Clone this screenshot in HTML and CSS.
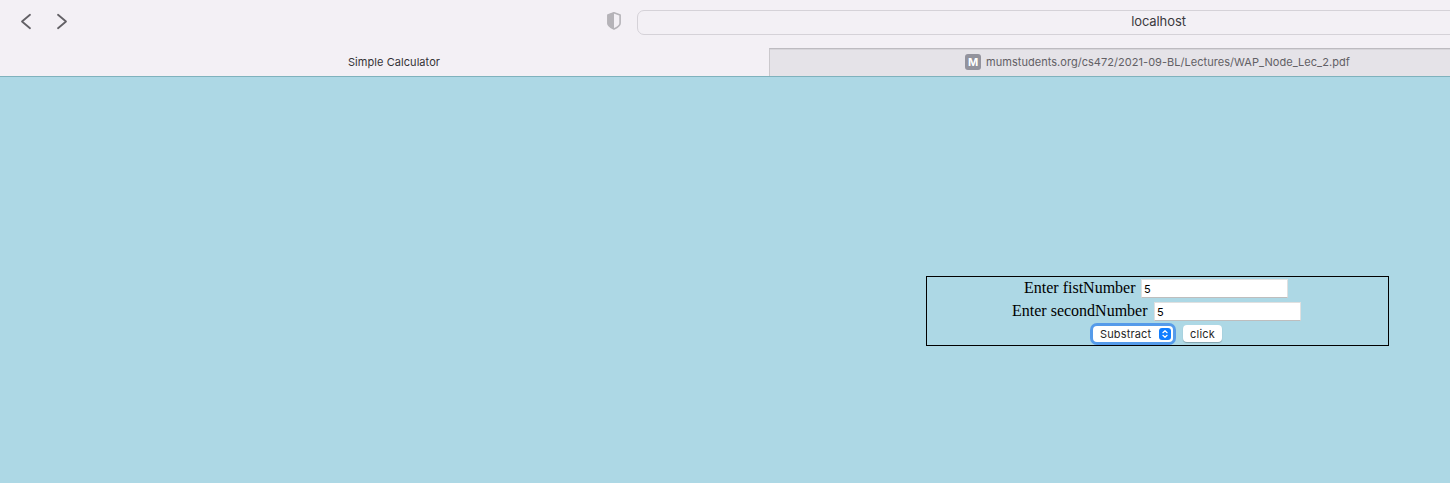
FILE: index.html
```html
<!DOCTYPE html>
<html lang="en">
<head>
<meta charset="utf-8">
<title>Simple Calculator</title>
<link rel="stylesheet" href="styles.css">
</head>
<body>
<header class="toolbar">
  <svg class="nav" width="60" height="20" viewBox="0 0 60 20" fill="none" stroke="#626065" stroke-width="1.8" stroke-linecap="round" stroke-linejoin="round"><path d="M14 3.8 6 10.5l8 6.7"/><path d="m42 3.8 8 6.7-8 6.7"/></svg>
  <svg class="shield" width="16" height="20" viewBox="0 0 16 20"><path d="M8 1.7 14.1 4v8.2c0 2.5-3.6 4.6-6.1 5.8-2.5-1.2-6.1-3.3-6.1-5.8V4z" fill="none" stroke="#b5b3b8" stroke-width="1.6" stroke-linejoin="round"/><path d="M8 1.3 1.5 4v8.2c0 2.5 3.5 4.6 6.5 6z" fill="#b5b3b8"/></svg>
  <div class="address">localhost</div>
</header>
<nav class="tabs">
  <div class="tab active"><span class="tab-title">Simple Calculator</span></div>
  <div class="tab other"><span class="favicon">M</span><span class="tab-url">mumstudents.org/cs472/2021-09-BL/Lectures/WAP_Node_Lec_2.pdf</span></div>
</nav>
<main class="page">
  <form class="calculator">
    <div class="row"><label class="first" for="a">Enter fistNumber</label><input id="a" class="number" type="text" value="5"></div>
    <div class="row"><label class="second" for="b">Enter secondNumber</label><input id="b" class="number" type="text" value="5"></div>
    <div class="row actions">
      <div class="select"><span class="option">Substract</span><svg class="stepper" width="12" height="12" viewBox="0 0 12 12"><rect width="12" height="12" rx="3" fill="#117eff"/><path d="M3.9 4.7 6 2.7l2.1 2M3.9 7.3 6 9.3l2.1-2" fill="none" stroke="#fff" stroke-width="1.2" stroke-linecap="round" stroke-linejoin="round"/></svg></div>
      <button class="submit" type="button">click</button>
    </div>
  </form>
</main>
</body>
</html>
```
FILE: styles.css
```css
* { box-sizing: border-box; }
body { margin: 0; height: 483px; overflow: hidden; background: #add8e5; font-family: "Liberation Serif", serif; }
.toolbar { display: flex; align-items: flex-start; height: 48px; padding-top: 10px; background: #f3f0f5; overflow: hidden; }
.nav { flex: none; margin: 1px 0 0 16px; }
.shield { flex: none; margin: 1px 0 0 530px; }
.address { flex: none; width: 1043px; height: 25px; margin-left: 15px; border: 1px solid #d5d2d8; border-radius: 7px; font: 13px/21px Inter, sans-serif; letter-spacing: -0.1px; color: #3b393d; text-align: center; }
.tabs { display: flex; height: 29px; background: #f3f0f5; border-bottom: 1px solid #7fb2bd; font: 11px/28px Inter, sans-serif; }
.tab { display: flex; height: 28px; white-space: nowrap; }
.active { width: 769px; padding-left: 348px; color: #353337; }
.tab-title { letter-spacing: 0.06px; }
.other { flex: 1; padding-left: 195px; background: #e5e3e8; border-left: 1px solid #cac8cc; border-top: 1px solid #bdbbc0; box-shadow: inset 0 1px 0 #d7d5da; line-height: 26px; color: #626065; }
.favicon { width: 16px; height: 16px; margin: 5px 5px 0 0; border-radius: 3px; background: #93939d; color: #fff; font-size: 11px; font-weight: 700; line-height: 16px; text-align: center; }
.tab-url { letter-spacing: 0.04px; }
.page { padding-top: 199px; }
.calculator { width: 463px; height: 70px; margin-left: 926px; border: 1px solid #000; }
.row { display: flex; height: 23px; padding-top: 2px; font-size: 16px; line-height: 18px; color: #000; }
.first { width: 117px; margin-left: 97px; }
.second { width: 142px; margin-left: 85px; }
.first, .second { white-space: nowrap; }
.number { width: 147px; height: 19px; padding: 1px 2px; border: 1px solid #e0e0e0; border-bottom-color: #bebebe; border-radius: 0; background: #fff; font: 11px Inter, sans-serif; color: #000; outline: 0; }
.actions { height: 22px; gap: 10px; padding: 3px 0 0 166px; }
.select { display: flex; align-items: center; width: 80px; height: 16px; padding-left: 7px; border-radius: 4px; background: #fff; box-shadow: 0 0 0 3px #559bea; font: 11px/16px Inter, sans-serif; color: #262626; }
.option { width: 59px; letter-spacing: 0.15px; }
.submit { width: 39px; height: 17px; margin-top: -1px; padding: 2px 0 0; border: 0; border-radius: 4px; background: #fff; box-shadow: 0 1px 1px rgba(0, 0, 0, .25); font: 11px/15px Inter, sans-serif; letter-spacing: .2px; color: #262626; }
```
